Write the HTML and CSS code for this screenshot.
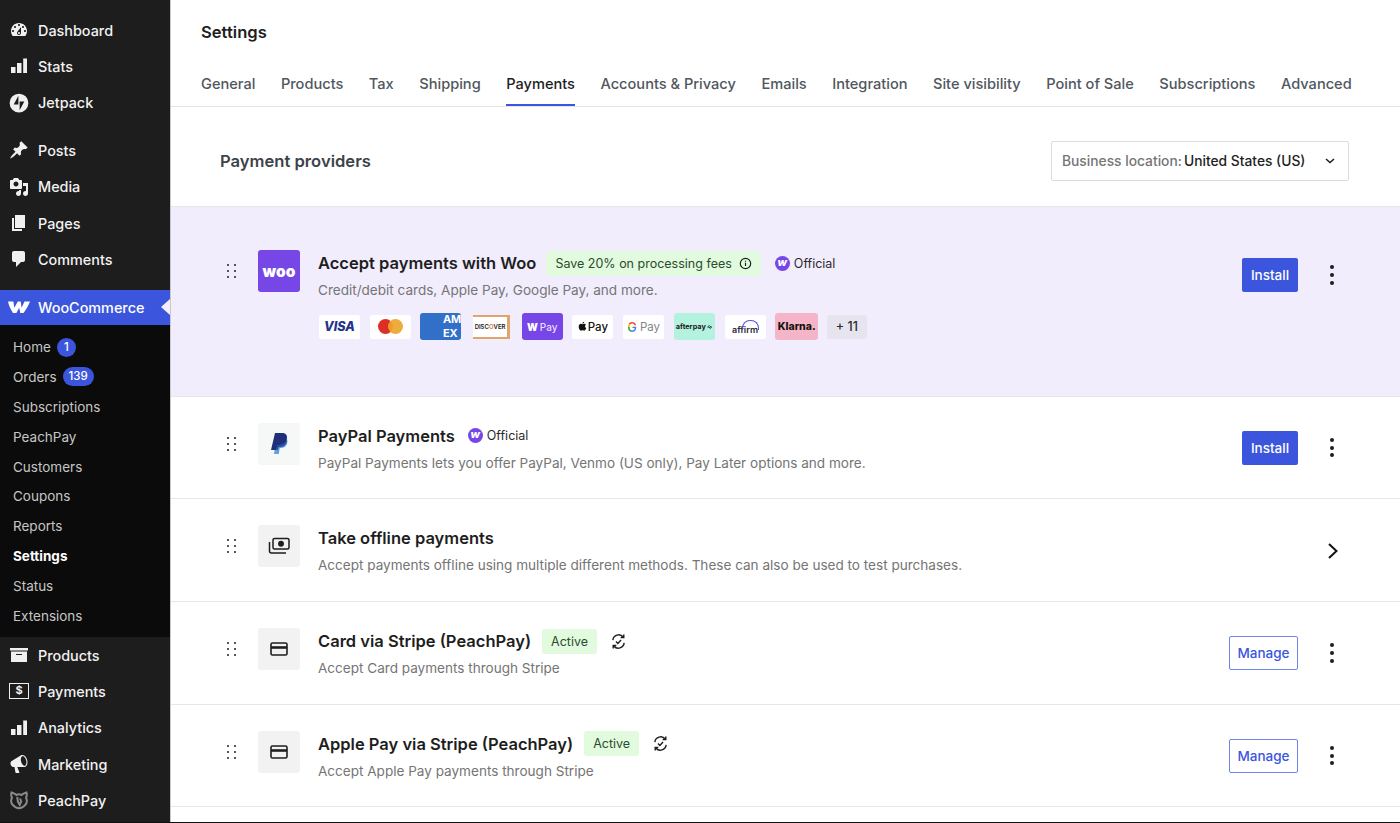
FILE: index.html
```html
<!DOCTYPE html>
<html lang="en">
  <head>
    <meta charset="UTF-8" />
    <title>Settings - Payments</title>
    <link rel="stylesheet" href="styles.css">
  </head>
  <body>
    <div class="app">
      <nav class="sidebar">
        <div class="menu-group">
          <a class="menu-item"><svg class="menu-icon" viewBox="0 0 20 20"><path d="M3.76 16h12.48c1.1-1.37 1.76-3.11 1.76-5 0-4.42-3.58-8-8-8s-8 3.58-8 8c0 1.89.66 3.63 1.76 5zM10 4c.55 0 1 .45 1 1s-.45 1-1 1-1-.45-1-1 .45-1 1-1zM6 6c.55 0 1 .45 1 1s-.45 1-1 1-1-.45-1-1 .45-1 1-1zm8 0c.55 0 1 .45 1 1s-.45 1-1 1-1-.45-1-1 .45-1 1-1zm-5.37 5.55L12 7v6c0 1.1-.9 2-2 2s-2-.9-2-2c0-.57.24-1.08.63-1.45zM4 10c.55 0 1 .45 1 1s-.45 1-1 1-1-.45-1-1 .45-1 1-1zm12 0c.55 0 1 .45 1 1s-.45 1-1 1-1-.45-1-1 .45-1 1-1zm-5 3c0-.55-.45-1-1-1s-1 .45-1 1 .45 1 1 1 1-.45 1-1z"/></svg>Dashboard</a>
          <a class="menu-item"><svg class="menu-icon" viewBox="0 0 20 20"><path d="M2 11h4.500v6H2zM8 7h4.500v10H8zM14.200 2.500H18V17h-3.800z"/></svg>Stats</a>
          <a class="menu-item"><svg class="menu-icon" viewBox="0 0 32 32"><path fill-rule="evenodd" d="M16 1a15 15 0 1 1 0 30 15 15 0 0 1 0-30zM15 4.500L7.500 18.500H15zM17 27.500l7.500-14H17z"/></svg>Jetpack</a>
        </div>
        <div class="menu-group menu-group-last">
          <a class="menu-item"><svg class="menu-icon" viewBox="0 0 20 20"><path d="M10.440 3.020l1.820-1.820 6.360 6.350-1.830 1.820c-1.050-.68-2.480-.57-3.410.36l-.75.75c-.92.93-1.040 2.350-.35 3.410l-1.830 1.820-2.410-2.410-2.800 2.790c-.42.42-3.380 2.710-3.800 2.290s1.860-3.390 2.280-3.810l2.790-2.790L4.100 9.360l1.830-1.820c1.050.69 2.480.57 3.400-.36l.75-.75c.93-.92 1.050-2.350.36-3.410z"/></svg>Posts</a>
          <a class="menu-item"><svg class="menu-icon" viewBox="0 0 20 20"><path d="M13 11V4c0-.55-.45-1-1-1h-1.670L9 1H5L3.670 3H2c-.55 0-1 .45-1 1v7c0 .55.45 1 1 1h10c.55 0 1-.45 1-1zM7 4.500c1.380 0 2.500 1.120 2.500 2.500S8.380 9.500 7 9.500 4.500 8.380 4.500 7 5.620 4.500 7 4.500zM14 6h5v10.500c0 1.380-1.120 2.500-2.500 2.500S14 17.880 14 16.500s1.120-2.500 2.500-2.500c.17 0 .34.020.5.050V9h-3V6zm-4 8.050V13h2v3.500c0 1.380-1.120 2.500-2.500 2.500S7 17.880 7 16.500 8.120 14 9.500 14c.17 0 .34.020.5.050z"/></svg>Media</a>
          <a class="menu-item"><svg class="menu-icon" viewBox="0 0 20 20"><path d="M6 15V2h10v13H6zm-1 1h8v2H3V5h2v11z"/></svg>Pages</a>
          <a class="menu-item"><svg class="menu-icon" viewBox="0 0 20 20"><path d="M5 2h9c1.100 0 2 .9 2 2v7c0 1.100-.9 2-2 2h-2l-5 5v-5H5c-1.100 0-2-.9-2-2V4c0-1.100.9-2 2-2z"/></svg>Comments</a>
        </div>
        <a class="menu-item menu-active"><svg class="menu-icon woo-w" viewBox="0 0 22 14"><path d="M0 1.500h5.400l.9 6.300L9.800 1.500h2.900l.9 6.300 2.900-6.300H22c-1.500 4-3.800 8-6.500 11.500h-3.200l-1.100-5.200-2.800 5.200H5C2.700 9.500.8 5.500 0 1.500z"/></svg>WooCommerce<span class="menu-arrow"></span></a>
        <div class="submenu">
          <a class="sub-item">Home <span class="count">1</span></a>
          <a class="sub-item">Orders <span class="count">139</span></a>
          <a class="sub-item">Subscriptions</a>
          <a class="sub-item">PeachPay</a>
          <a class="sub-item">Customers</a>
          <a class="sub-item">Coupons</a>
          <a class="sub-item">Reports</a>
          <a class="sub-item sub-current">Settings</a>
          <a class="sub-item">Status</a>
          <a class="sub-item">Extensions</a>
        </div>
        <a class="menu-item"><svg class="menu-icon" viewBox="0 0 20 20"><path d="M19 3v2.500H1V3h18zM2 6.500h16V17H2V6.500zM13 10V9H7v1h6z"/></svg>Products</a>
        <a class="menu-item"><span class="dollar-box">$</span>Payments</a>
        <a class="menu-item"><svg class="menu-icon" viewBox="0 0 20 20"><path d="M2 11h4.500v6H2zM8 7h4.500v10H8zM14.200 2.500H18V17h-3.800z"/></svg>Analytics</a>
        <a class="menu-item"><svg class="menu-icon" viewBox="0 0 20 20"><path d="M18.150 5.940c.46 1.620.38 3.220-.02 4.480-.42 1.280-1.260 2.180-2.300 2.480-.16.060-.26.060-.4.060-.06.020-.12.020-.18.020-.06.020-.14.020-.22.020h-6.800l2.220 5.500c.02.14-.06.26-.14.34-.08.1-.24.16-.34.16H6.950c-.1 0-.26-.06-.34-.16-.08-.08-.16-.2-.14-.34l-1-5.500H4.250l-.02-.02c-.5.060-1.080-.18-1.540-.62s-.88-1.080-1.060-1.880c-.24-.8-.2-1.560-.02-2.200.18-.62.58-1.080 1.060-1.300l.02-.02 9-5.400c.1-.06.18-.1.24-.16.06-.04.14-.08.24-.12.16-.08.28-.12.5-.18 1.040-.3 2.240.1 3.220 1 .98.88 1.840 2.240 2.260 3.860zm-2.580 5.980h-.02c.4-.1.74-.34 1.040-.7.58-.7.86-1.760.86-3.040-.02-.64-.1-1.300-.28-1.980-.34-1.360-1.020-2.500-1.780-3.240-.38-.38-.8-.64-1.180-.78-.18-.06-.36-.08-.54-.08-.08 0-.18.020-.26.040-.58.16-1.040.66-1.300 1.400-.28.740-.38 1.700-.26 2.780.08.5.18 1 .32 1.500.34 1.360 1.020 2.480 1.780 3.240.78.740 1.620 1.100 2.400.96z"/></svg>Marketing</a>
        <a class="menu-item"><svg class="menu-icon peach-icon" viewBox="0 0 20 20"><path d="M2.500 2.500c2 .5 3.700 1.200 5 2.500 1.500-.8 3.500-.8 5 0 1.300-1.300 3-2 5-2.500.5 2 .5 3.500-.5 5.200 1.300 2.500 1 5.500-1 7.500-1.500 1.800-3.800 3-6 3s-4.500-1.200-6-3c-2-2-2.300-5-1-7.500-1-1.700-1-3.200-.5-5.200zM8.500 7c-.5 2.800.2 5.300 2.200 8l1.500-3.500-1.200-3"/></svg>PeachPay</a>
      </nav>

      <main class="main">
        <header class="page-head">
          <h1 class="page-title">Settings</h1>
          <div class="tabs">
            <a class="tab">General</a>
            <a class="tab">Products</a>
            <a class="tab">Tax</a>
            <a class="tab">Shipping</a>
            <a class="tab tab-active">Payments</a>
            <a class="tab">Accounts &amp; Privacy</a>
            <a class="tab">Emails</a>
            <a class="tab">Integration</a>
            <a class="tab">Site visibility</a>
            <a class="tab">Point of Sale</a>
            <a class="tab">Subscriptions</a>
            <a class="tab">Advanced</a>
          </div>
        </header>

        <section class="providers-head">
          <h2 class="providers-title">Payment providers</h2>
          <div class="location-select">
            <span class="location-label">Business location:</span>
            <span class="location-value">United States (US)</span>
            <svg class="select-caret" viewBox="0 0 10 6"><path d="M1 1l4 3.600L9 1"/></svg>
          </div>
        </section>

        <div class="provider provider-hero">
          <span class="drag"><i></i><i></i><i></i><i></i><i></i><i></i></span>
          <div class="logo logo-woo">woo</div>
          <div class="info">
            <div class="title-line">
              <h3 class="name">Accept payments with Woo</h3>
              <span class="pill pill-save">Save 20% on processing fees
                <svg class="info-icon" viewBox="0 0 12 12"><circle cx="6" cy="6" r="4.800"/><path d="M6 5.400v3M6 3.400v1"/></svg>
              </span>
              <span class="official"><span class="official-mark">w</span>Official</span>
            </div>
            <p class="desc">Credit/debit cards, Apple Pay, Google Pay, and more.</p>
            <div class="cards">
              <span class="card card-visa">VISA</span>
              <span class="card card-mc"><i class="mc-red"></i><i class="mc-amber"></i></span>
              <span class="card card-amex">AM<br>EX</span>
              <span class="card card-discover">DISC<em>O</em>VER</span>
              <span class="card card-woopay"><b>W</b>Pay</span>
              <span class="card card-apple"><svg viewBox="0 0 12 14"><path d="M8.300 3.300c.9 0 1.800.5 2.300 1.200-1.800 1.100-1.500 3.700.5 4.500-.5 1.400-1.600 3.500-2.800 3.500-.8 0-1.100-.5-2.100-.5s-1.300.5-2.100.5C2.600 12.500.9 9.500.9 7.200c0-2.400 1.600-3.800 3-3.800.9 0 1.600.6 2.200.6.500 0 1.300-.7 2.200-.7zM8.200.6c.1 1.300-1.100 2.600-2.300 2.500C5.800 1.800 7 .7 8.200.6z"/></svg>Pay</span>
              <span class="card card-gpay"><b>G</b>Pay</span>
              <span class="card card-afterpay">afterpay<svg viewBox="0 0 10 8"><path d="M1 4l3-2.500 1 1.500 3 1-3 2.500V5L1 4z"/></svg></span>
              <span class="card card-affirm"><span class="affirm-text">affirm</span></span>
              <span class="card card-klarna">Klarna.</span>
              <span class="card card-more">+ 11</span>
            </div>
          </div>
          <div class="actions">
            <a class="btn btn-primary">Install</a>
            <span class="kebab"><i></i><i></i><i></i></span>
          </div>
        </div>

        <div class="provider">
          <span class="drag"><i></i><i></i><i></i><i></i><i></i><i></i></span>
          <div class="logo"><svg class="paypal" viewBox="0 0 20 24"><path fill="#5aa5e0" d="M18 7c1.500 4-1 9-6 9h-1.300l-.9 6H5l1-6 2-5h3c3.500 0 6-1.500 7-4z"/><path fill="#1f2f7a" d="M6 1h7c4 0 5.800 2.500 4.800 6.500-.9 3.600-3.500 5.500-7.300 5.500H8.300L7.300 18H2z"/><path fill="#2c4aa8" d="M8.300 13h2.200c3.800 0 6.400-1.900 7.300-5.500.3 1.700 0 3.200-.9 4.500-1.300 1.900-3.300 3-5.900 3H9.800L8.700 18H7.300z"/></svg></div>
          <div class="info">
            <div class="title-line">
              <h3 class="name">PayPal Payments</h3>
              <span class="official"><span class="official-mark">w</span>Official</span>
            </div>
            <p class="desc">PayPal Payments lets you offer PayPal, Venmo (US only), Pay Later options and more.</p>
          </div>
          <div class="actions">
            <a class="btn btn-primary">Install</a>
            <span class="kebab"><i></i><i></i><i></i></span>
          </div>
        </div>

        <div class="provider">
          <span class="drag"><i></i><i></i><i></i><i></i><i></i><i></i></span>
          <div class="logo logo-gray"><svg class="line-icon" viewBox="0 0 22 20"><rect x="5" y="2.500" width="16" height="10.500" rx="1.500"/><circle cx="13" cy="7.800" r="2.200" fill="#1e1e1e"/><path d="M1.500 6v9c0 1.200.8 2 2 2h14.500"/></svg></div>
          <div class="info">
            <div class="title-line">
              <h3 class="name">Take offline payments</h3>
            </div>
            <p class="desc">Accept payments offline using multiple different methods. These can also be used to test purchases.</p>
          </div>
          <div class="actions actions-chevron">
            <svg class="chevron" viewBox="0 0 12 18"><path d="M2 2l7.500 7L2 16"/></svg>
          </div>
        </div>

        <div class="provider">
          <span class="drag"><i></i><i></i><i></i><i></i><i></i><i></i></span>
          <div class="logo logo-gray"><svg class="card-icon" viewBox="0 0 18 14"><rect x="1" y="1" width="16" height="12" rx="1.500"/><path d="M1 5.500h16" stroke-width="2.600"/></svg></div>
          <div class="info">
            <div class="title-line">
              <h3 class="name">Card via Stripe (PeachPay)</h3>
              <span class="pill pill-active">Active</span>
              <svg class="sync-icon" viewBox="0 0 18 18"><path d="M3 7.500A6.200 6.200 0 0 1 14 4.300M15 10.500A6.200 6.200 0 0 1 4 13.700M14.600 1.500v3.300h-3.300M3.400 16.500v-3.300h3.300M6.300 9l2 2 3.400-3.600"/></svg>
            </div>
            <p class="desc">Accept Card payments through Stripe</p>
          </div>
          <div class="actions">
            <a class="btn btn-outline">Manage</a>
            <span class="kebab"><i></i><i></i><i></i></span>
          </div>
        </div>

        <div class="provider">
          <span class="drag"><i></i><i></i><i></i><i></i><i></i><i></i></span>
          <div class="logo logo-gray"><svg class="card-icon" viewBox="0 0 18 14"><rect x="1" y="1" width="16" height="12" rx="1.500"/><path d="M1 5.500h16" stroke-width="2.600"/></svg></div>
          <div class="info">
            <div class="title-line">
              <h3 class="name">Apple Pay via Stripe (PeachPay)</h3>
              <span class="pill pill-active">Active</span>
              <svg class="sync-icon" viewBox="0 0 18 18"><path d="M3 7.500A6.200 6.200 0 0 1 14 4.300M15 10.500A6.200 6.200 0 0 1 4 13.700M14.600 1.500v3.300h-3.300M3.400 16.500v-3.300h3.300M6.300 9l2 2 3.400-3.600"/></svg>
            </div>
            <p class="desc">Accept Apple Pay payments through Stripe</p>
          </div>
          <div class="actions">
            <a class="btn btn-outline">Manage</a>
            <span class="kebab"><i></i><i></i><i></i></span>
          </div>
        </div>
      </main>
    </div>
  </body>
</html>
```

FILE: styles.css
```css
* {
  box-sizing: border-box;
  margin: 0;
  padding: 0;
  font-family: Inter, "Liberation Sans", sans-serif;
}

html,
body {
  height: 100%;
  overflow: hidden;
  background: #111;
}

.app {
  display: flex;
  height: 822px;
}

/* SIDEBAR */
.sidebar {
  width: 170px;
  flex-shrink: 0;
  background: #1d1d1d;
  padding-top: 12px;
}

.menu-group {
  margin-bottom: 11.6px;
}

.menu-group-last {
  margin-bottom: 12.4px;
}

.menu-item {
  position: relative;
  display: flex;
  align-items: center;
  height: 36.3px;
  padding-left: 38px;
  font-size: 14.4px;
  font-weight: 500;
  color: #f2f2f2;
}

.menu-icon {
  position: absolute;
  left: 9px;
  top: 8px;
  width: 20px;
  height: 20px;
  fill: #f0f0f0;
}

.peach-icon {
  fill: none;
  stroke: #8a8a8a;
  stroke-width: 2;
}

.dollar-box {
  position: absolute;
  left: 9px;
  top: 10px;
  width: 20px;
  height: 16px;
  border: 1.5px solid #f0f0f0;
  font-size: 11px;
  font-weight: 700;
  line-height: 13px;
  text-align: center;
}

.menu-active {
  height: 35px;
  background: #3b56dd;
  color: #fff;
}

.menu-active .woo-w {
  left: 8px;
  top: 10px;
  width: 22px;
  height: 14px;
  fill: #fff;
}

.menu-arrow {
  position: absolute;
  right: 0;
  top: 9px;
  border: 8px solid transparent;
  border-left-width: 0;
  border-right: 9px solid #f4f1fd;
}

.submenu {
  padding: 7px 0 6.2px;
  background: #0b0b0b;
}

.sub-item {
  display: flex;
  align-items: center;
  gap: 6px;
  height: 29.9px;
  padding-left: 13px;
  font-size: 13.5px;
  color: #c6c6c6;
}

.sub-current {
  font-weight: 700;
  color: #fff;
}

.count {
  min-width: 19px;
  height: 19px;
  padding: 0 6px;
  border-radius: 10px;
  background: #3b56dd;
  font-size: 11.5px;
  font-weight: 500;
  line-height: 19px;
  text-align: center;
  color: #fff;
}

/* MAIN */
.main {
  flex: 1;
  min-width: 0;
  background: #fff;
  border-left: 1px solid #c9c9c9;
}

.page-head {
  height: 107px;
  padding: 21px 0 0 30px;
  border-bottom: 1px solid #e4e4e4;
}

.page-title {
  height: 22px;
  font-size: 16.6px;
  font-weight: 600;
  line-height: 22px;
  color: #1e1e1e;
}

.tabs {
  display: flex;
  gap: 25.5px;
  margin-top: 20px;
}

.tab {
  height: 43px;
  font-size: 14.6px;
  font-weight: 500;
  line-height: 42px;
  white-space: nowrap;
  color: #50575e;
}

.tab-active {
  border-bottom: 2px solid #3b56dd;
  color: #1e1e1e;
}

.providers-head {
  display: flex;
  align-items: center;
  justify-content: space-between;
  height: 100px;
  padding: 8px 51px 0 49px;
  border-bottom: 1px solid #e6e6e6;
}

.providers-title {
  font-size: 16.6px;
  font-weight: 600;
  color: #3c434a;
}

.location-select {
  display: flex;
  align-items: center;
  gap: 2px;
  width: 298px;
  height: 40px;
  padding: 0 13px 0 10px;
  border: 1px solid #dcdcdc;
  border-radius: 2px;
  font-size: 13.8px;
  font-weight: 500;
}

.location-label {
  color: #757575;
}

.location-value {
  flex: 1;
  color: #1e1e1e;
}

.select-caret {
  width: 10px;
  height: 6px;
  fill: none;
  stroke: #1e1e1e;
  stroke-width: 1.5;
}

/* PROVIDER ROWS */
.provider {
  display: flex;
  align-items: flex-start;
  height: 102.7px;
  padding: 26px 56px 0 54px;
  border-bottom: 1px solid #e6e6e6;
}

.provider-hero {
  height: 189.7px;
  padding-top: 43px;
  background: #f1edfd;
}

.drag {
  display: grid;
  grid-template-columns: 2px 2px;
  gap: 4px 5px;
  width: 11px;
  margin: 14px 22px 0 0;
  padding-left: 2px;
}

.drag i {
  width: 2px;
  height: 2px;
  border-radius: 50%;
  background: #1e1e1e;
}

.logo {
  display: flex;
  align-items: center;
  justify-content: center;
  width: 42px;
  height: 42px;
  flex-shrink: 0;
  margin-right: 18px;
  border-radius: 3px;
  background: #f6f7f7;
}

.logo-gray {
  background: #f2f2f2;
}

.logo-woo {
  background: #7746e6;
  font-size: 15.5px;
  font-weight: 900;
  color: #fff;
}

.paypal {
  width: 20px;
  height: 24px;
}

.line-icon {
  width: 22px;
  height: 20px;
  fill: none;
  stroke: #1e1e1e;
  stroke-width: 1.5;
}

.card-icon {
  width: 18px;
  height: 14px;
  fill: none;
  stroke: #1e1e1e;
  stroke-width: 1.6;
}

.info {
  flex: 1;
  min-width: 0;
}

.title-line {
  display: flex;
  align-items: center;
  gap: 11px;
  height: 26px;
}

.name {
  font-size: 16.5px;
  font-weight: 600;
  color: #1e1e1e;
}

.desc {
  margin-top: 5px;
  font-size: 13.55px;
  line-height: 18px;
  color: #757575;
}

.pill {
  display: flex;
  align-items: center;
  height: 25px;
  padding: 0 9px;
  border-radius: 3px;
  background: #e2fbdf;
  font-size: 12.5px;
  color: #2d4a2e;
}

.pill-save {
  gap: 7px;
  margin: 0 1px 0 -1px;
}

.info-icon {
  width: 13px;
  height: 13px;
  fill: none;
  stroke: #1e1e1e;
  stroke-width: 1.1;
}

.official {
  display: flex;
  align-items: center;
  gap: 4px;
  margin-left: 2px;
  font-size: 12.5px;
  color: #2b2b2b;
}

.official-mark {
  width: 15px;
  height: 15px;
  border-radius: 50%;
  background: #7746e6;
  font-size: 11px;
  font-weight: 800;
  font-style: italic;
  line-height: 13px;
  text-align: center;
  color: #fff;
}

.sync-icon {
  width: 17px;
  height: 17px;
  margin-left: 2px;
  fill: none;
  stroke: #1e1e1e;
  stroke-width: 1.5;
}

/* CARD LOGOS */
.cards {
  display: flex;
  align-items: center;
  gap: 9.7px;
  margin: 14px 0 0 1px;
}

.card {
  display: flex;
  align-items: center;
  justify-content: center;
  width: 41px;
  height: 24px;
  flex-shrink: 0;
  border-radius: 2px;
  background: #fff;
  overflow: hidden;
  white-space: nowrap;
}

.card-visa {
  font-size: 12.5px;
  font-weight: 800;
  font-style: italic;
  color: #25318c;
}

.card-mc i {
  width: 15px;
  height: 15px;
  border-radius: 50%;
}

.mc-red {
  background: #de2f26;
}

.mc-amber {
  margin-left: -5px;
  background: #eea52e;
  opacity: 0.92;
}

.card-amex {
  justify-content: flex-end;
  height: 27px;
  border-radius: 3px;
  background: #316fc9;
  font-size: 11px;
  font-weight: 700;
  line-height: 13.5px;
  text-align: left;
  color: #fff;
}

.card-discover {
  width: 37px;
  margin: 0 2px;
  border: solid #e3a46b;
  border-width: 2px 3px 2px 0;
  border-radius: 0;
  font-size: 6px;
  font-weight: 600;
  color: #222;
}

.card-discover em {
  font-style: normal;
  color: #e0701e;
}

.card-woopay {
  gap: 2px;
  height: 27px;
  border-radius: 3px;
  background: #7746e6;
  font-size: 10px;
  font-weight: 500;
  color: #e8dcff;
}

.card-woopay b {
  font-size: 10px;
  font-weight: 900;
  color: #fff;
}

.card-apple {
  gap: 1px;
  font-size: 11.5px;
  font-weight: 500;
  color: #111;
}

.card-apple svg {
  width: 9px;
  height: 11px;
  fill: #111;
}

.card-gpay {
  gap: 3px;
  font-size: 11.5px;
  color: #80868b;
}

.card-gpay b {
  font-size: 13px;
  font-weight: 600;
  color: transparent;
  background: conic-gradient(#ea4335 0 25%, #4285f4 25% 50%, #34a853 50% 75%, #fbbc05 75% 90%, #ea4335 90%);
  -webkit-background-clip: text;
  background-clip: text;
}

.card-afterpay {
  gap: 1px;
  height: 27px;
  border-radius: 3px;
  background: #b2f2de;
  font-size: 7.3px;
  font-weight: 700;
  color: #1a1a1a;
}

.card-afterpay svg {
  width: 6px;
  height: 6px;
  fill: none;
  stroke: #1a1a1a;
  stroke-width: 1.2;
}

.card-affirm {
  align-items: flex-end;
  padding-bottom: 4px;
}

.affirm-text {
  position: relative;
  font-size: 9px;
  font-weight: 600;
  color: #2a2a3a;
}

.affirm-text::after {
  content: "";
  position: absolute;
  right: -1px;
  top: -4px;
  width: 15px;
  height: 9px;
  border: 1.2px solid #5a55d8;
  border-bottom: 0;
  border-radius: 8px 8px 0 0;
}

.card-klarna {
  width: 43px;
  height: 27px;
  border-radius: 3px;
  background: #f5b5c8;
  font-size: 10.5px;
  font-weight: 800;
  color: #17120f;
}

.card-more {
  width: 40px;
  margin-left: -1px;
  border-radius: 3px;
  background: #e6e4ee;
  font-size: 12.5px;
  font-weight: 500;
  color: #2b2b2b;
}

/* ACTIONS */
.actions {
  display: flex;
  align-items: center;
  height: 34px;
  margin-top: 8px;
}

.actions-chevron {
  margin-top: 9px;
  padding-right: 5px;
}

.chevron {
  width: 12px;
  height: 18px;
  fill: none;
  stroke: #111;
  stroke-width: 2;
}

.btn {
  display: flex;
  align-items: center;
  justify-content: center;
  height: 34px;
  border-radius: 2px;
  font-size: 13.5px;
  font-weight: 500;
}

.btn-primary {
  width: 56px;
  background: #3b56dd;
  color: #fff;
}

.btn-outline {
  width: 69px;
  border: 1px solid #6f86ea;
  color: #3b56dd;
}

.kebab {
  display: flex;
  flex-direction: column;
  align-items: center;
  gap: 3.7px;
  width: 24px;
  margin-left: 22px;
}

.kebab i {
  width: 4px;
  height: 4px;
  border-radius: 50%;
  background: #1e1e1e;
}
```
